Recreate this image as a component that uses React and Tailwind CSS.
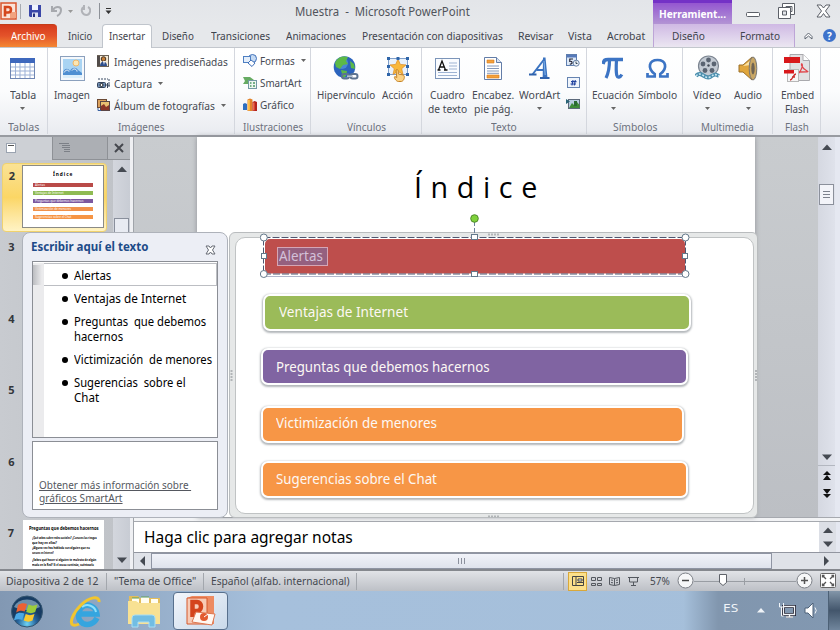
import React, { useLayoutEffect, useRef } from "react";

// Single line of text condensed or widened to fill the width of its box.
function T({ c, children, block = "" }) {
  const box = useRef(null);
  const ink = useRef(null);
  useLayoutEffect(() => {
    const k = box.current.clientWidth / ink.current.offsetWidth;
    ink.current.style.transform = `scaleX(${k})`;
  }, []);
  return (
    <span ref={box} className={"block shrink-0 whitespace-nowrap " + c}>
      <span ref={ink} className={"inline-block origin-left whitespace-pre " + block}>{children}</span>
    </span>
  );
}

const Caret = ({ c = "" }) => (
  <svg className={"shrink-0 " + c} width="5" height="3" viewBox="0 0 5 3"><path d="M0 0h5L2.500 3z" fill="#666" /></svg>
);

const Arrow = ({ dir = "up", c = "" }) => {
  const d = { up: "M0 6L5 0.500L10 6z", down: "M0 0.500h10L5 6z", left: "M6 0v10L1 5z", right: "M1 0v10L6 5z" }[dir];
  return <svg className={"shrink-0 " + c} width={dir === "up" || dir === "down" ? 10 : 7} height={dir === "up" || dir === "down" ? 6 : 10}><path d={d} fill="#454a52" /></svg>;
};

/* ---------- icons ---------- */
const PLogo = () => (
  <svg width="17" height="18" viewBox="0 0 17 18" className="shrink-0">
    <rect x="1" y="1" width="15" height="16" fill="#fbe3d8" stroke="#d9552c" strokeWidth="1.500" />
    <path d="M10 10h6v6h-6z" fill="#f2a37f" />
    <path d="M5 14.500V5h3.200a2.700 2.700 0 010 5.500H5" fill="none" stroke="#d4461c" strokeWidth="2.600" />
  </svg>
);
const Save = () => (
  <svg width="12" height="12" viewBox="0 0 12 12" className="shrink-0">
    <path d="M0 0h12v12H1L0 11z" fill="#3a47a8" /><path d="M3 0h6v5H3z" fill="#eef3ff" /><path d="M3 7.500h6V12H3z" fill="#dfe3f2" /><path d="M4 8.500h2V12H4z" fill="#26307c" />
  </svg>
);
const TableIcon = () => (
  <svg width="25" height="27" viewBox="0 0 25 27">
    <rect x=".5" y="3.500" width="24" height="20" fill="#fff" stroke="#6f86b3" />
    <rect x="0" y="3" width="25" height="5" fill="#3e68bd" />
    <path d="M1 12h23M1 16h23M1 20h23M5.500 8v15M10 8v15M15 8v15M20 8v15" stroke="#9db1d6" />
  </svg>
);
const ImageIcon = () => (
  <svg width="25" height="27" viewBox="0 0 25 27">
    <rect x=".5" y="1.500" width="24" height="24" fill="#f4f8fc" stroke="#8ba0bd" />
    <rect x="3" y="4" width="19" height="19" fill="#a9d4f3" />
    <circle cx="16" cy="8" r="3" fill="#fbe6b4" stroke="#efb667" />
    <path d="M3 20v-3c2-4 5-4 7-1 2-4 6-4 8-1l4 3v2z" fill="#4f8fd2" /><path d="M4 17.500c2-3 4-3 5-1M12 15.500c2-3 5-1 5 1" stroke="#fff" fill="none" /><path d="M3 20h19v3H3z" fill="#dbeefb" />
  </svg>
);
const Clip = () => (
  <svg width="12" height="12" viewBox="0 0 12 12" className="shrink-0">
    <rect x=".5" y=".5" width="11" height="11" fill="#f6ead4" stroke="#6c6256" /><path d="M0 1h3v10H0z" fill="#514b49" /><circle cx="6.500" cy="4" r="2.300" fill="#c97e35" stroke="#3b3026" /><path d="M3 11c0-6 7-6 7 0z" fill="#2c4d8c" /><path d="M6 6l1 4 1-4" fill="#fff" />
  </svg>
);
const Shot = () => (
  <svg width="13" height="12" viewBox="0 0 13 12" className="shrink-0">
    <path d="M1 2h10M12 2v8" stroke="#394a62" strokeDasharray="2 1" fill="none" /><rect x=".5" y="5.500" width="8" height="5" rx="1" fill="#6f8db2" stroke="#34435a" /><circle cx="4.500" cy="8" r="1.500" fill="#fff" stroke="#222" /><path d="M8 8h5M10.500 6v5" stroke="#35445b" />
  </svg>
);
const Album = () => (
  <svg width="13" height="12" viewBox="0 0 13 12" className="shrink-0">
    <rect x=".5" y=".5" width="9" height="8" fill="#dca15c" stroke="#6b4a35" /><rect x="3.500" y="2.500" width="9" height="9" fill="#eac071" stroke="#5a4545" /><path d="M4 11V7l3-2 2 3 3-2v5z" fill="#8c3527" /><path d="M1 9v2.500h3" stroke="#3a62a1" fill="none" />
  </svg>
);
const Shapes = () => (
  <svg width="14" height="13" viewBox="0 0 14 13" className="shrink-0">
    <circle cx="9.500" cy="4.500" r="4" fill="#c5daf3" stroke="#3f6fb7" /><rect x=".5" y="2.500" width="7" height="6" fill="#e4eefa" stroke="#4e7fc2" /><path d="M8 6l4 3-3 3.500L5 9z" fill="#fff" stroke="#3f6fb7" />
  </svg>
);
const Smart = () => (
  <svg width="14" height="13" viewBox="0 0 14 13" className="shrink-0">
    <path d="M0 1h7l4 3-3 4H0l2-3z" fill="#66ab62" /><rect x="5.500" y="4.500" width="8" height="8" fill="#eef6f0" stroke="#7399a4" /><path d="M7 7h1.500M10 7h2M7 10h1.500M10 10h2" stroke="#4c9863" strokeWidth="1.500" />
  </svg>
);
const Bars = () => (
  <svg width="14" height="13" viewBox="0 0 14 13" className="shrink-0">
    <path d="M0 6l2-1 2 1v6H0z" fill="#2e6fc0" /><path d="M4.500 1.500l2.500-1 2.500 1V13h-5z" fill="#e2832a" /><path d="M5 2h1.800v10.500H5z" fill="#ffc24e" /><path d="M9.500 4l2.200-1L14 4v9H9.500z" fill="#b4231e" /><path d="M10 4.500h1.500v8H10z" fill="#ef6a4c" />
  </svg>
);
const Globe = () => (
  <svg width="26" height="27" viewBox="0 0 26 27">
    <circle cx="11.500" cy="12" r="10.800" fill="#2c64bd" /><circle cx="9" cy="8" r="6" fill="#5d9fe5" opacity=".6" />
    <path d="M2 8c3-7 9-7 13-6l-2 4 2 3-5 1-3 4-4-2zM8 15l6 1-1 5-3 2zM17 6l4 3 1 5-4-1z" fill="#5cb947" />
    <g fill="none" stroke="#5c7391" strokeWidth="2"><rect x="9" y="19" width="7" height="4.500" rx="2.200" /><rect x="17.500" y="19" width="7" height="4.500" rx="2.200" /></g><path d="M14 21.200h6" stroke="#b9c6d6" strokeWidth="1.500" />
  </svg>
);
const Action = () => (
  <svg width="24" height="27" viewBox="0 0 24 27">
    <rect x="2.500" y="3.500" width="19" height="16" fill="#e8f1fb" stroke="#7f9fca" />
    <path d="M12 4l2.300 5.400 5.700.5-4.300 3.800 1.300 5.700-5-3-5 3 1.300-5.700L4 9.900l5.700-.5z" fill="#f9b83c" stroke="#dc8b23" strokeWidth=".7" />
    <g fill="#2f65a9"><path d="M1 2h3v3H1zM10.500 2h3v3h-3zM20 2h3v3h-3zM1 10h3v3H1zM20 10h3v3h-3zM1 18h3v3H1zM20 18h3v3h-3z" /></g>
    <path d="M10 15c1.500-1 2.300 0 2.300 1.500V19l5 1c2 1 1 6-2 6.500h-3c-2 0-5-4-3.500-5l2 1z" fill="#fbd184" stroke="#c58325" />
  </svg>
);
const TextBox = () => (
  <svg width="25" height="27" viewBox="0 0 25 27">
    <rect x=".5" y="3.500" width="24" height="20" fill="#fafcff" stroke="#7c95b9" /><path d="M3.500 15L7 6l3.500 9M5 12h4M2.500 15h3M9 15h3.500" stroke="#111" strokeWidth="1.300" fill="none" /><path d="M14 8h8M14 11h8M14 14h8M3 17.500h19M3 20.500h19" stroke="#9fb4d3" />
  </svg>
);
const Header = () => (
  <svg width="18" height="27" viewBox="0 0 18 27">
    <path d="M.5 2.500h12l5 5v17H.5z" fill="#fff" stroke="#637da8" /><path d="M12.500 2.500v5h5" fill="#d9e3f2" stroke="#637da8" /><path d="M3 5h7v3H3zM3 20h12v3H3z" fill="#f5a13b" stroke="#d57b1b" strokeWidth=".6" /><path d="M3 11h12M3 13.500h12M3 16h12M3 18.300h12" stroke="#8498b9" />
  </svg>
);
const WordArt = () => (
  <svg width="21" height="27" viewBox="0 0 21 27">
    <path d="M3.500 19.500L15 4.500" fill="none" stroke="#3b73c0" strokeWidth="2" /><path d="M14 2.500h2.500L18.500 23h-4.800z" fill="#3b73c0" /><path d="M7.500 15h8" stroke="#3b73c0" strokeWidth="2" /><path d="M0 19.500h7.500M11 23h9.500" stroke="#2f62ac" strokeWidth="2" /><path d="M15 6l1.200 14" stroke="#85b6ea" />
  </svg>
);
const Pi = () => (
  <svg width="22" height="27" viewBox="0 0 22 27">
    <path d="M1 9c1-4 2-4.500 5-4.500h15" fill="none" stroke="#3c74c4" strokeWidth="3.600" /><path d="M7.500 5c0 8-1 13-3.500 18M14.500 5c-.5 8-.5 12 .3 15.500.6 2.500 3.500 2 5-1" fill="none" stroke="#3c74c4" strokeWidth="3.200" />
  </svg>
);
const Omega = () => (
  <svg width="23" height="27" viewBox="0 0 23 27">
    <path d="M1.500 18v3.500h7.200V19C1 13 3 5 11.500 5S22 13 14.300 19v2.500h7.200V18" fill="none" stroke="#3c74c4" strokeWidth="2.700" />
  </svg>
);
const Reel = () => (
  <svg width="25" height="27" viewBox="0 0 25 27">
    <circle cx="13.500" cy="11" r="10" fill="#c3cad3" stroke="#7b8490" strokeWidth="1.200" /><g fill="#5a6472"><circle cx="13.500" cy="5" r="2.400" /><circle cx="8" cy="9" r="2.400" /><circle cx="19" cy="9" r="2.400" /><circle cx="10" cy="15.500" r="2.400" /><circle cx="17" cy="15.500" r="2.400" /></g><circle cx="13.500" cy="10.500" r="1.200" fill="#444c58" />
    <path d="M1 21c5-6 9 4 14 1s5-3 9-1" fill="none" stroke="#4b8fae" strokeWidth="4" /><path d="M1 21c5-6 9 4 14 1s5-3 9-1" fill="none" stroke="#c9e6f2" strokeWidth="1.600" strokeDasharray="2 1.500" />
  </svg>
);
const Speaker = () => (
  <svg width="20" height="27" viewBox="0 0 20 27">
    <path d="M1 10h4l9-8v23l-9-8H1z" fill="#e0a63c" stroke="#9c7029" /><path d="M5 11l8-6v5z" fill="#fce2a2" /><ellipse cx="15" cy="13.500" rx="3.800" ry="11.500" fill="#c9a765" stroke="#777" /><ellipse cx="15" cy="13.500" rx="1.700" ry="6" fill="#6f6454" />
  </svg>
);
const Flash = () => (
  <svg width="26" height="29" viewBox="0 0 26 29">
    <path d="M6 .5h13l6.500 6v20H6z" fill="#e1e1e3" stroke="#a9a9ad" /><path d="M19 .5v6h6.500" fill="#fff" stroke="#a9a9ad" /><path d="M0 3h16v6H0z" fill="#d8181b" />
    <path d="M15 19c3-4 4-8 3-9s-1 4 5 7c2 1 1 1-8 1" fill="none" stroke="#e0444a" strokeWidth="1.300" /><rect x="3.500" y="15.500" width="11" height="12" fill="#f6f6f6" stroke="#b7b7b7" /><path d="M0 16h10v3.500H0z" fill="#d8181b" /><path d="M6 26c3 0 3-6 6-6M8 23h3" stroke="#cc2c2c" strokeWidth="1.500" fill="none" />
  </svg>
);
const DateIcon = () => (
  <svg width="14" height="13" viewBox="0 0 14 13"><rect x=".5" y=".5" width="10" height="11" fill="#dce8f7" stroke="#5f7eae" /><path d="M1 1h10v2.500H1z" fill="#5679b9" /><path d="M7 5H3.800v2.300c3-.5 3 3.200 0 2.700" stroke="#223" fill="none" strokeWidth="1.200" /><circle cx="10.200" cy="9.200" r="3" fill="#eef3fa" stroke="#6781a4" /><path d="M10 7.500v2h1.500" stroke="#345" fill="none" /></svg>
);
const NumIcon = () => (
  <svg width="13" height="11" viewBox="0 0 13 11"><rect x=".5" y=".5" width="12" height="10" fill="#f0f5fc" stroke="#6684b1" /><path d="M6 3L5 8.500M8.300 3l-1 5.500M4 4.600h5.500M3.500 7H9" stroke="#2344a0" strokeWidth="1.100" /></svg>
);
const ObjIcon = () => (
  <svg width="14" height="12" viewBox="0 0 14 12"><rect x="2.500" y="1.500" width="11" height="9" fill="#b9cde0" stroke="#5d6a7b" /><path d="M3 10l3-5 3 3 2-4 2.500 3v3z" fill="#3e8c39" /><path d="M0 1l4 2.500L0 6z" fill="#2a6477" /><path d="M8 3h3v5H8z" fill="#2b6b34" /></svg>
);

/* ---------- ribbon ---------- */
const Group = ({ w, labelW, label, children }) => (
  <div className={"flex h-[86px] shrink-0 flex-col border-r border-[#d4d7de] " + w}>
    <div className="flex h-[71px]">{children}</div>
    <div className="flex justify-center text-[11px] leading-[15px] text-[#6c717d]"><T c={labelW}>{label}</T></div>
  </div>
);
const Big = ({ w, icon, a, aw, b, bw, arrow }) => (
  <div className={"flex shrink-0 flex-col items-center text-[11px] leading-[14px] " + w}>
    <div className="mt-[7px] flex h-[27px] items-center">{icon}</div>
    <T c={"mt-[6px] " + aw}>{a}</T>
    {b && <T c={bw}>{b}</T>}
    {arrow && <Caret c="mt-[5px]" />}
  </div>
);
const Row = ({ icon, w, t, arrow }) => (
  <div className="flex h-[22px] items-center text-[11px] leading-[15px]">
    <div className="w-[17px]">{icon}</div><T c={w}>{t}</T>{arrow && <Caret c="ml-[6px]" />}
  </div>
);

const tabs = [
  ["Inicio", "ml-[11px] w-[24px]"],
  ["Diseño", "ml-[10px] w-[32px]"],
  ["Transiciones", "ml-[17px] w-[59px]"],
  ["Animaciones", "ml-[16px] w-[60px]"],
  ["Presentación con diapositivas", "ml-[16px] w-[141px]"],
  ["Revisar", "ml-[15px] w-[35px]"],
  ["Vista", "ml-[15px] w-[24px]"],
  ["Acrobat", "ml-[15px] w-[38px]"],
];

function TitleBar() {
  return (
    <div className="flex h-[24px] items-start bg-gradient-to-b from-[#e3e5e9] to-[#e6e8eb]">
      <div className="flex h-[22px] w-[295px] items-center">
        <PLogo /><div className="ml-[3px] mr-[8px] h-[15px] w-px bg-[#a6aab1]" /><Save />
        <svg className="ml-[10px]" width="40" height="12" viewBox="0 0 40 12"><path d="M1 1v5h5M2 5c2-4 8-4 8 0 0 3-2 5-4 6" stroke="#a7a9ae" strokeWidth="2" fill="none" /><path d="M17 5h5l-2.500 3z" fill="#999" /><path d="M32 2c-3 4 0 8 3.500 8S41 4 37 2M33 0v5" stroke="#b1b3b8" strokeWidth="2" fill="none" /></svg>
        <div className="ml-[8px] h-[16px] w-px bg-[#8d9198]" />
        <svg className="ml-[5px]" width="7" height="6"><path d="M1 0h5v1H1zM.5 2.500h6L3.500 6z" fill="#333" /></svg>
      </div>
      <T c="w-[175px] text-[12.500px] leading-[24px] text-[#50545b]">{"Muestra  -  Microsoft PowerPoint"}</T>
      <div className="ml-[183px] flex h-[24px] w-[79px] justify-center border-t-[3px] border-[#7431c6] bg-gradient-to-b from-[#9455d0] to-[#b394d4]">
        <T c="w-[67px] text-[11px] font-bold leading-[21px] text-white">Herramient...</T>
      </div>
      <svg className="ml-[13px]" width="86" height="22" viewBox="0 0 86 22" fill="#fff" stroke="#5c6068">
        <rect x="1.500" y="12.500" width="13" height="4" rx="1" /><path d="M37.500 3.500h12v11h-12z" /><path d="M41 6.500h6v5h-6z" /><path d="M33.500 7.500h12v11h-12z" /><path d="M37.500 11h4v4h-4z" fill="#e3e5e9" />
        <path d="M72 5h4l2.500 3L81 5h4l-4.500 6 4.500 6h-4l-2.500-3.500L76 17h-4l4.500-6z" />
      </svg>
    </div>
  );
}

function TabRow() {
  const tab = ([t, c]) => <T key={t} c={"leading-[24px] " + c}>{t}</T>;
  return (
    <div className="flex h-[24px] border-b border-[#c3c7cd] bg-[#e6e8eb] text-[11px] text-[#3f444d]">
      <div className="flex w-[57px] justify-center rounded-tr-sm border-t border-[#c33d18] bg-gradient-to-b from-[#d63a1c] via-[#e4532a] to-[#f48733] text-white"><T c="w-[35px] leading-[22px]">Archivo</T></div>
      {tab(tabs[0])}
      <div className="ml-[10px] flex h-[25px] w-[50px] justify-center rounded-t-sm border border-b-0 border-[#c0c5cc] bg-white"><T c="w-[36px] leading-[22px]">Insertar</T></div>
      {tabs.slice(1).map(tab)}
      <div className="ml-[8px] flex h-[23px] w-[142px] border-x border-[#bda5d7] bg-gradient-to-b from-[#cfb9e4] to-[#ebe6f1]">
        <T c="ml-[18px] w-[33px] leading-[24px]">Diseño</T><T c="ml-[35px] w-[40px] leading-[24px]">Formato</T>
      </div>
      <svg className="ml-[9px] mt-[8px]" width="9" height="8"><path d="M1 7V4.500L4.500 1 8 4.500V7L4.500 4z" fill="#fff" stroke="#5c6470" /></svg>
      <div className="ml-[10px] mt-[5px] flex h-[13px] w-[13px] items-center justify-center rounded-full bg-[#3d72cb] text-[10px] font-bold leading-none text-white">?</div>
    </div>
  );
}

function Ribbon() {
  return (
    <div className="flex h-[87px] bg-gradient-to-b from-white via-[#fbfcfd] to-[#e9ebf0] text-[#464a53]">
      <Group w="w-[48px]" labelW="w-[31px]" label="Tablas"><Big w="ml-[9px] w-[27px]" icon={<TableIcon />} a="Tabla" aw="w-[26px]" arrow /></Group>
      <Group w="w-[187px]" labelW="w-[46px]" label="Imágenes">
        <Big w="ml-[6px] w-[36px]" icon={<ImageIcon />} a="Imagen" aw="w-[36px]" />
        <div className="ml-[7px] flex flex-col pt-[2px]">
          <Row icon={<Clip />} t="Imágenes prediseñadas" w="w-[114px]" />
          <Row icon={<Shot />} t="Captura" w="w-[38px]" arrow />
          <Row icon={<Album />} t="Álbum de fotografías" w="w-[101px]" arrow />
        </div>
      </Group>
      <Group w="w-[76px]" labelW="w-[60px]" label="Ilustraciones">
        <div className="ml-[8px] flex flex-col pt-px">
          <Row icon={<Shapes />} t="Formas" w="w-[35px]" arrow /><Row icon={<Smart />} t="SmartArt" w="w-[42px]" /><Row icon={<Bars />} t="Gráfico" w="w-[34px]" />
        </div>
      </Group>
      <Group w="w-[111px]" labelW="w-[39px]" label="Vínculos">
        <Big w="ml-[6px] w-[58px]" icon={<Globe />} a="Hipervínculo" aw="w-[58px]" /><Big w="ml-[7px] w-[31px]" icon={<Action />} a="Acción" aw="w-[31px]" />
      </Group>
      <Group w="w-[165px]" labelW="w-[26px]" label="Texto">
        <Big w="ml-[6px] w-[39px]" icon={<TextBox />} a="Cuadro" aw="w-[35px]" b="de texto" bw="w-[39px]" />
        <Big w="ml-[5px] w-[42px]" icon={<Header />} a="Encabez." aw="w-[42px]" b="pie pág." bw="w-[39px]" />
        <Big w="ml-[4px] w-[42px]" icon={<WordArt />} a="WordArt" aw="w-[41px]" arrow />
        <div className="ml-[6px] flex flex-col items-center pt-px"><div className="flex h-[22px] items-center"><DateIcon /></div><div className="flex h-[22px] items-center"><NumIcon /></div><div className="flex h-[22px] items-center"><ObjIcon /></div></div>
      </Group>
      <Group w="w-[96px]" labelW="w-[44px]" label="Símbolos">
        <Big w="ml-[5px] w-[42px]" icon={<Pi />} a="Ecuación" aw="w-[42px]" arrow /><Big w="ml-[4px] w-[39px]" icon={<Omega />} a="Símbolo" aw="w-[39px]" />
      </Group>
      <Group w="w-[90px]" labelW="w-[53px]" label="Multimedia">
        <Big w="ml-[10px] w-[28px]" icon={<Reel />} a="Vídeo" aw="w-[28px]" arrow /><Big w="ml-[13px] w-[28px]" icon={<Speaker />} a="Audio" aw="w-[28px]" arrow />
      </Group>
      <Group w="w-[48px]" labelW="w-[24px]" label="Flash"><Big w="ml-[7px] w-[34px]" icon={<Flash />} a="Embed" aw="w-[33px]" b="Flash" bw="w-[24px]" /></Group>
    </div>
  );
}

/* ---------- thumbnails ---------- */
const mini = [["bg-[#b94a48]", "Alertas"], ["bg-[#8fbb53]", "Ventajas de Internet"], ["bg-[#7c589f]", "Preguntas que debemos hacernos"], ["bg-[#f0914a]", "Victimización de menores"], ["bg-[#f69545]", "Sugerencias sobre el Chat"]];

function Thumbs() {
  return (
    <div className="flex h-[432px] w-[130px] shrink-0 flex-col overflow-hidden bg-gradient-to-r from-[#c8cbd0] to-[#bfc2c7] font-bold text-[#33363b]">
      <div className="flex h-[23px] shrink-0">
        <div className="w-[52px] bg-[#cdd0d5] pl-[6px] pt-[6px]"><div className="h-[10px] w-[10px] border border-[#9aa3b0] bg-white"><div className="mx-auto mt-px h-px w-[6px] bg-[#555]" /></div></div>
        <div className="w-[55px] border-b border-l border-[#8e9196] bg-[#acafb4] pl-[6px] pt-[6px]"><svg width="12" height="9"><path d="M0 .5h10M3 2.500h8M3 4.500h8M5 6.500h6M5 8.500h6" stroke="#7c8087" /></svg></div>
        <div className="flex flex-1 items-center justify-center border-b border-l border-[#8e9196] bg-[#b5b8bd]"><svg width="10" height="10"><path d="M1 1l8 8M9 1L1 9" stroke="#45484e" strokeWidth="2" /></svg></div>
      </div>
      <div className="flex flex-1">
        <div className="flex w-[108px] flex-col pl-[2px] pt-[3px]">
          <div className="flex h-[69px] w-[105px] shrink-0 rounded-sm border border-[#f0d26e] bg-gradient-to-b from-[#fae294] via-[#fbd665] to-[#fff3c4]">
            <div className="w-[18px] pt-[4px] text-center text-[11px] leading-[15px]">2</div>
            <div className="ml-px mt-px h-[63px] w-[82px] border border-[#8b8b86] bg-white">
              <T c="mx-auto mt-[5px] w-[20px] text-[5px] leading-[7px] text-black" block="tracking-[1px]">Índice</T>
              <div className="mt-[5px] flex flex-col gap-[4px] pl-[10px]">
                {mini.map(([bg, t]) => <div key={t} className={"h-[4px] w-[60px] overflow-hidden pl-[2px] text-[3px] font-normal leading-[4px] text-white " + bg}>{t}</div>)}
              </div>
            </div>
          </div>
          <div className="flex w-[19px] flex-col text-center text-[11px]">
            <div className="h-[72px] pt-[7px] leading-[15px]">3</div><div className="h-[71px] pt-[7px] leading-[15px]">4</div><div className="h-[72px] pt-[7px] leading-[15px]">5</div><div className="h-[71px] pt-[7px] leading-[15px]">6</div>
          </div>
          <div className="flex">
            <div className="w-[18px] pt-[7px] text-center text-[11px] leading-[15px]">7</div>
            <div className="ml-[3px] mt-[2px] h-[50px] w-[81px] bg-white text-black">
              <T c="ml-[6px] mt-[4px] w-[70px] text-[6px] leading-[9px]">Preguntas que debemos hacernos</T>
              <div className="mt-[2px] flex flex-col pl-[9px] text-[3.500px] leading-[5px]">
                <T c="w-[65px]">¿Qué sabes sobre redes sociales? ¿Conoces los riesgos</T><T c="w-[25px]">que hay en ellas?</T><T c="w-[58px]">¿Alguna vez has hablado con alguien que no</T><T c="w-[22px]">conoces en Internet?</T>
                <div className="mt-[2px]"><T c="w-[64px]">¿Sabes qué hacer si alguien te molesta de algún</T><T c="w-[62px]">modo en la Red? Si el acoso continúa, cuéntaselo</T></div>
              </div>
            </div>
          </div>
        </div>
        <div className="ml-[5px] flex w-[17px] flex-col items-center bg-gradient-to-r from-[#d3d6dd] to-[#c8ccd4]">
          <Arrow c="mt-[6px]" />
          <div className="mt-[46px] h-[60px] w-[15px] border border-[#898f9c] bg-[#e8ebf2]" />
          <div className="flex-1" /><Arrow dir="down" c="mb-[7px]" />
        </div>
      </div>
    </div>
  );
}

const bullets = [
  [["Alertas", "w-[37px]"]],
  [["Ventajas de Internet", "w-[112px]"]],
  [["Preguntas  que debemos", "w-[132px]"], ["hacernos", "w-[49px]"]],
  [["Victimización  de menores", "w-[138px]"]],
  [["Sugerencias  sobre el", "w-[112px]"], ["Chat", "w-[25px]"]],
];

function TextPane() {
  return (
    <div className="absolute left-[22px] top-[95px] flex h-[286px] w-[206px] flex-col rounded-lg border border-[#aeb2ba] bg-[#eceef5] px-[9px]">
      <div className="flex h-[28px] justify-between">
        <T c="-ml-px mt-[6px] w-[117px] text-[12px] font-bold leading-[15px] text-[#1d4b88]">Escribir aquí el texto</T>
        <svg className="mr-[2px] mt-[12px]" width="11" height="10"><path d="M1 1h3l1.500 2L7 1h3L7.500 5 10 9H7L5.500 7 4 9H1l2.500-4z" fill="#fff" stroke="#676b75" /></svg>
      </div>
      <div className="flex h-[177px] w-[186px] border border-[#8b8e95] bg-white pt-px text-[12px] leading-[15px] text-black">
        <div className="w-[11px] bg-[#ebebed]"><div className="mt-[2px] h-[20px] w-[9px] bg-gradient-to-r from-[#bcbdc1] to-[#ebebed]" /></div>
        <div className="flex flex-1 flex-col">
          {bullets.map((lines, i) => (
            <div key={i} className={i === 0 ? "mb-[-3px] flex h-[23px] border-y border-r border-[#bcbec3] pl-[18px] pt-[4px]" : "flex pl-[18px] pt-[8px]"}>
              <div className="mr-[6px] mt-[5px] h-[6px] w-[6px] rounded-full bg-black" />
              <div>{lines.map(([t, c]) => <T key={t} c={c}>{t}</T>)}</div>
            </div>
          ))}
        </div>
      </div>
      <div className="mt-[3px] flex h-[69px] w-[186px] flex-col justify-end border border-[#8b8e95] bg-white pb-[5px] pl-[6px] text-[11px] leading-[13px] text-[#555860]">
        <T c="w-[152px]" block="underline">{"Obtener más información sobre "}</T><T c="w-[84px]" block="underline">gráficos SmartArt</T>
      </div>
    </div>
  );
}

/* ---------- slide ---------- */
const Item = ({ box, bg, tw, t, lh = "leading-[31px]" }) => (
  <div className={"h-[37px] shrink-0 rounded-[7px] border-[2px] border-white shadow-[0_1px_2px_1px_#b4b8bb] " + box + " " + bg}>
    <T c={"ml-[13px] text-[14.500px] text-[#fdf8f4] " + lh + " " + tw}>{t}</T>
  </div>
);

function Slide() {
  return (
    <div className="relative h-[380px] w-[684px] bg-gradient-to-b from-[#c9cccf] to-[#bcbfc4]">
      <div className="ml-[63px] flex h-[380px] w-[558px] bg-white shadow-[0_0_5px_#8e9196]">
        <T c="ml-[217px] mt-[29px] w-[132px] font-['Open_Sans',sans-serif] text-[30px] leading-[42px] text-black" block="tracking-[9px]">Índice</T>
      </div>
      {/* graphic frame */}
      <div className="absolute left-[95px] top-[95px] flex h-[286px] w-[529px] flex-col rounded-md border border-[#b9bcbe] bg-[#e6e8e8] pb-[3px] pl-[5px] pr-[3px] pt-[4px]">
        <div className="flex flex-1 flex-col rounded-[10px] border border-[#c0c3c4] bg-white pl-[24px] pt-[1px]">
          <div className="relative ml-[5px] h-[35px] w-[420px] rounded-[5px] bg-[#be4e4c] pl-[12px] pt-[8px]">
            <div className="h-[19px] w-[51px] border border-[#d5a6b5] bg-[#95607f] pl-px"><T c="w-[44px] text-[14px] leading-[16px] text-[#d3c1d9]">Alertas</T></div>
            <svg className="absolute -left-[5px] -top-[26px]" width="432" height="66" viewBox="0 0 432 66">
              <path d="M214.500 8v17" stroke="#6d829d" strokeDasharray="5 2" />
              <rect x="3.500" y="24.500" width="422" height="36.500" fill="none" stroke="#fff" /><rect x="3.500" y="24.500" width="422" height="36.500" fill="none" stroke="#4f5770" strokeDasharray="7 2" /><path d="M3 63.500h423" stroke="#b1b5ca" />
              <circle cx="214.500" cy="5.500" r="3.800" fill="#7fd13b" stroke="#4e8a2a" />
              <g fill="#fff" stroke="#64788a"><circle cx="3.800" cy="24.500" r="3.500" /><circle cx="425.500" cy="24.500" r="3.500" /><circle cx="3.800" cy="61" r="3.500" /><circle cx="425.500" cy="61" r="3.500" /><rect x="211.500" y="21.500" width="6" height="5" /><rect x="211.500" y="58.500" width="6" height="5" /><rect x="1.500" y="40.500" width="5" height="5" /><rect x="422.500" y="40.500" width="5" height="5" /></g>
            </svg>
          </div>
          <Item box="mt-[20px] ml-[3px] w-[428px]" bg="bg-[#9bbb59]" tw="w-[129px] ml-[14px]" t="Ventajas de Internet" />
          <Item box="mt-[17px] ml-px w-[427px]" bg="bg-[#8064a2]" tw="w-[214px]" lh="leading-[33px]" t="Preguntas que debemos hacernos" />
          <Item box="mt-[21px] ml-px w-[423px]" bg="bg-[#f79646]" tw="w-[161px]" lh="leading-[29px]" t="Victimización de menores" />
          <Item box="mt-[18px] ml-px w-[427px]" bg="bg-[#f79646]" tw="w-[161px]" t="Sugerencias sobre el Chat" />
        </div>
      </div>
      <svg className="absolute left-[95px] top-[95px]" width="530" height="286" fill="none" stroke="#b2b5b8"><path d="M259 2.500h12M259 284.500h12M2.500 138v12M527 138v12" strokeWidth="2" strokeDasharray="2 1" /></svg>
    </div>
  );
}

function Editor() {
  return (
    <div className="flex h-[432px] flex-1 flex-col border-l border-[#a0a4aa]">
      <div className="flex h-[380px]">
        <Slide />
        <div className="flex w-[17px] flex-col items-center bg-gradient-to-r from-[#d5d8e1] to-[#dfe2eb]">
          <Arrow c="mt-[7px]" />
          <div className="mt-[34px] flex h-[21px] w-[15px] items-center justify-center border border-[#8b909b] bg-[#f3f4f9]"><svg width="7" height="7"><path d="M0 .5h7M0 3.500h7M0 6.500h7" stroke="#7d828d" /></svg></div>
          <div className="flex-1" /><Arrow dir="down" c="mb-[5px]" /><div className="h-px w-full bg-[#b3b7c0]" />
          <svg className="my-[5px]" width="8" height="29"><path d="M4 0l4 4H0zM4 4l4 5H0zM0 18h8l-4 5zM0 23h8l-4 4z" fill="#111" /></svg>
          <div className="h-[12px]" />
        </div>
        <div className="flex-1 bg-[#e5e8f1]" />
      </div>
      <div className="h-[5px] border-y border-[#a6a9af] bg-[#f2f3f5]" />
      <div className="flex h-[30px] bg-white">
        <T c="ml-[10px] w-[209px] text-[15.500px] leading-[30px] text-black">Haga clic para agregar notas</T>
        <div className="ml-auto flex w-[17px] flex-col items-center justify-between bg-[#dcdfe6] py-[5px]"><Arrow /><Arrow dir="down" /></div><div className="w-[4px] bg-[#e5e8f1]" />
      </div>
      <div className="flex h-[17px] items-center border-t border-[#9296a0] bg-[#dfe2e8]">
        <Arrow dir="left" c="ml-[5px]" />
        <div className="ml-[5px] flex h-[16px] w-[621px] items-center justify-center border border-[#8f95a3] bg-gradient-to-b from-[#f1f3f9] to-[#dfe3ec]"><svg width="7" height="6"><path d="M.5 0v6M3.500 0v6M6.500 0v6" stroke="#8b909c" /></svg></div>
        <Arrow dir="right" c="ml-auto mr-[10px]" />
      </div>
    </div>
  );
}

function StatusBar() {
  return (
    <div className="flex h-[22px] shrink-0 items-center border-t-2 border-[#85888e] bg-gradient-to-b from-[#e1e3e7] to-[#bdc0c6] text-[11px] leading-[18px] text-[#44484f]">
      <T c="-mt-px ml-[6px] w-[93px]">Diapositiva 2 de 12</T><div className="ml-[7px] h-[17px] w-px bg-[#a3a7ad]" />
      <T c="-mt-px ml-[7px] w-[82px]">"Tema de Office"</T><div className="ml-[7px] h-[17px] w-px bg-[#a3a7ad]" />
      <T c="-mt-px ml-[7px] w-[139px]">Español (alfab. internacional)</T><div className="ml-[6px] h-[17px] w-px bg-[#a3a7ad]" />
      <div className="ml-auto mr-[4px] h-[17px] w-px bg-[#a3a7ad]" />
      <div className="flex h-[19px] w-[19px] items-center justify-center border border-[#d9a83a] bg-[#fce08a]">
        <svg width="12" height="10" fill="none" stroke="#444"><path d="M.5.5h11v9H.5zM4 1v8M5 6.500h6" /><path d="M6 3h4v2H6z" fill="#fff" /></svg>
      </div>
      <svg className="ml-[4px]" width="48" height="11" viewBox="0 0 48 11" fill="none" stroke="#54585f"><path d="M.5 1.500h4v3h-4zM6.500 1.500h4v3h-4zM.5 7.500h4v2h-4zM6.500 7.500h4v2h-4z" /><path d="M18.500 1.500l5 1 5-1v7l-5 1-5-1zM23.500 2.500v7M20 4l2 .3M20 6.500l2 .3M25 4.300l2-.3M25 6.800l2-.3" /><path d="M37 1.500h11M38.500 2v4h8V2M42.500 6v3M40 9.500h5" /></svg>
      <T c="ml-[11px] w-[20px]">57%</T>
      <svg className="ml-[7px]" width="163" height="20" viewBox="0 0 163 20" fill="none" stroke="#7c8087">
        <path d="M17 10.500h102M67.500 7v7" stroke="#999da3" /><circle cx="8.500" cy="9.500" r="7.500" fill="#f6f7f8" /><path d="M5 9.500h7" stroke="#444" strokeWidth="1.500" /><circle cx="127.500" cy="9.500" r="7.500" fill="#f6f7f8" /><path d="M124 9.500h7M127.500 6v7" stroke="#555" strokeWidth="1.500" />
        <path d="M42.500 3.500h7v8l-3.500 3-3.500-3z" fill="#fff" stroke="#5f636a" />
        <rect x="143.500" y="2.500" width="15" height="14" rx="1" fill="#fff" stroke="#666" />
        <path d="M145.500 6.500v-2h2M154.500 4.500h2v2M145.500 12.500v2h2M154.500 14.500h2v-2M146 5l3 3M156 5l-3 3M146 14l3-3M156 14l-3-3" stroke="#555" strokeWidth="1.300" />
      </svg>
    </div>
  );
}

function Taskbar() {
  return (
    <div className="flex h-[39px] shrink-0 items-center bg-gradient-to-r from-[#8298b3] via-[#a6c0dc] via-[32%] to-[#a5bfda]">
      <svg className="ml-[11px]" width="32" height="34" viewBox="0 0 32 34">
        <defs><radialGradient id="orb" cy=".9"><stop offset="0" stopColor="#6fd4f5" /><stop offset=".6" stopColor="#27649c" /><stop offset="1" stopColor="#173c63" /></radialGradient></defs>
        <circle cx="16" cy="17.500" r="15.500" fill="url(#orb)" stroke="#35556f" /><path d="M3 13a14 12 0 0126 0c-8 4-18 4-26 0z" fill="#b7d1e3" opacity=".55" />
        <path d="M7 11c3-2 6-2 9-1l-2.300 7.500c-3-1-5.500-1-8.500 1z" fill="#ed6032" /><path d="M17.500 10.500c3 1.500 5.500 1.500 9 0l-2.300 7.500c-3 1.500-5.500 1.500-9 0z" fill="#9ccc3c" /><path d="M5 20c3-2 5.500-1.500 8.300-.5l-2 6.500c-3-1.200-5.500-1-8.500.5z" fill="#4ba9e6" /><path d="M14.700 20c3 1.500 5.500 1.500 8.800 0l-2 6.500c-3 1.500-5.500 1.500-8.800 0z" fill="#fbc92e" />
      </svg>
      <svg className="ml-[26px]" width="34" height="34" viewBox="0 0 34 34" fill="none">
        <path d="M28 24c-3 6-9 8-14 5.500C8 26 8 17 13 13s14-1 15 7H12" stroke="#35a5df" strokeWidth="5.500" /><path d="M13 13c5-4 13-1 14 5" stroke="#8ee1fb" strokeWidth="2" /><path d="M30 8c1-7-10-5-18 3S0 29 4 31c2 1 4 0 6-1" stroke="#f1c52e" strokeWidth="3" />
      </svg>
      <svg className="ml-[24px]" width="34" height="34" viewBox="0 0 34 34">
        <path d="M2 2h9l2 2h20v26H2z" fill="#e2bd5c" /><path d="M5 4h7v6H5zM14 3h8v6h-8zM24 5h7v5h-7z" fill="#fffdf2" /><path d="M5 4h7M14 3h8" stroke="#5e9d58" /><path d="M1 7h8l3 2h21v21H1z" fill="#f8e193" /><path d="M5 33v-9q0-3 3-3h17q3 0 3 3v9h-6v-5H11v5z" fill="#71bde3" stroke="#a9def5" />
      </svg>
      <div className="ml-[12px] flex h-[38px] w-[55px] items-center justify-center rounded-sm border border-[#58708d] bg-gradient-to-br from-[#f3f6fb] to-[#c9d9ea]">
        <svg width="33" height="34" viewBox="0 0 33 34"><path d="M3 4l5-2h22v28H3z" fill="#ed8b62" /><path d="M3 4h20v26H3z" fill="#f7cbb6" stroke="#d5582d" /><path d="M8.500 23V8h4.500a4 4.500 0 010 9H9" stroke="#d4441c" strokeWidth="4.500" fill="none" /><path d="M12 18l19 2-3 11-20-3z" fill="#fff7f1" stroke="#dd7650" /><circle cx="20" cy="23" r="4" fill="#e25b31" /><path d="M20 23l4-3" stroke="#fff" /></svg>
      </div>
      <div className="ml-auto flex h-full w-[156px] items-center bg-gradient-to-r from-[#a5bfda] via-[#8196ae] via-[22%] to-[#8298b1]">
        <T c="-mt-[6px] ml-[39px] w-[15px] text-[11px] leading-[15px] text-[#f0f4f9]">ES</T>
        <svg className="ml-[19px]" width="8" height="5"><path d="M0 4.500L4 0l4 4.500z" fill="#f0f4f8" /></svg>
        <svg className="ml-[13px]" width="40" height="17" viewBox="0 0 40 17" fill="none" stroke="#f2f5f8"><path d="M5.500 4.500h11v8h-11zM8 14.500h7M11.500 12v3" stroke="#223" strokeWidth="3" /><path d="M5.500 4.500h11v8h-11zM8 15h7M11.500 12v3" strokeWidth="1.300" /><path d="M1.500 1v4h4V1M3.500 5v9h2" /><path d="M27 6h3l5-5v15l-5-5h-3z" fill="#fff" stroke="#4c6178" /><path d="M37 5.500q2.500 3 0 6" /></svg>
        <div className="ml-auto h-full w-[12px] border-l border-[#4d6176] bg-gradient-to-b from-[#8396a9] via-[#43566c] to-[#71869d]" />
      </div>
    </div>
  );
}

export default function App() {
  return (
    <div className="flex h-[630px] w-[840px] flex-col overflow-hidden bg-[#e6e8eb] font-['Noto_Sans',sans-serif]">
      <TitleBar />
      <TabRow />
      <Ribbon />
      <div className="h-[2px] bg-[#989ba1]" />
      <div className="relative flex h-[432px] bg-[#eff0f3]">
        <Thumbs />
        <div className="w-[3px]" />
        <Editor />
        <TextPane />
      </div>
      <StatusBar />
      <Taskbar />
    </div>
  );
}
